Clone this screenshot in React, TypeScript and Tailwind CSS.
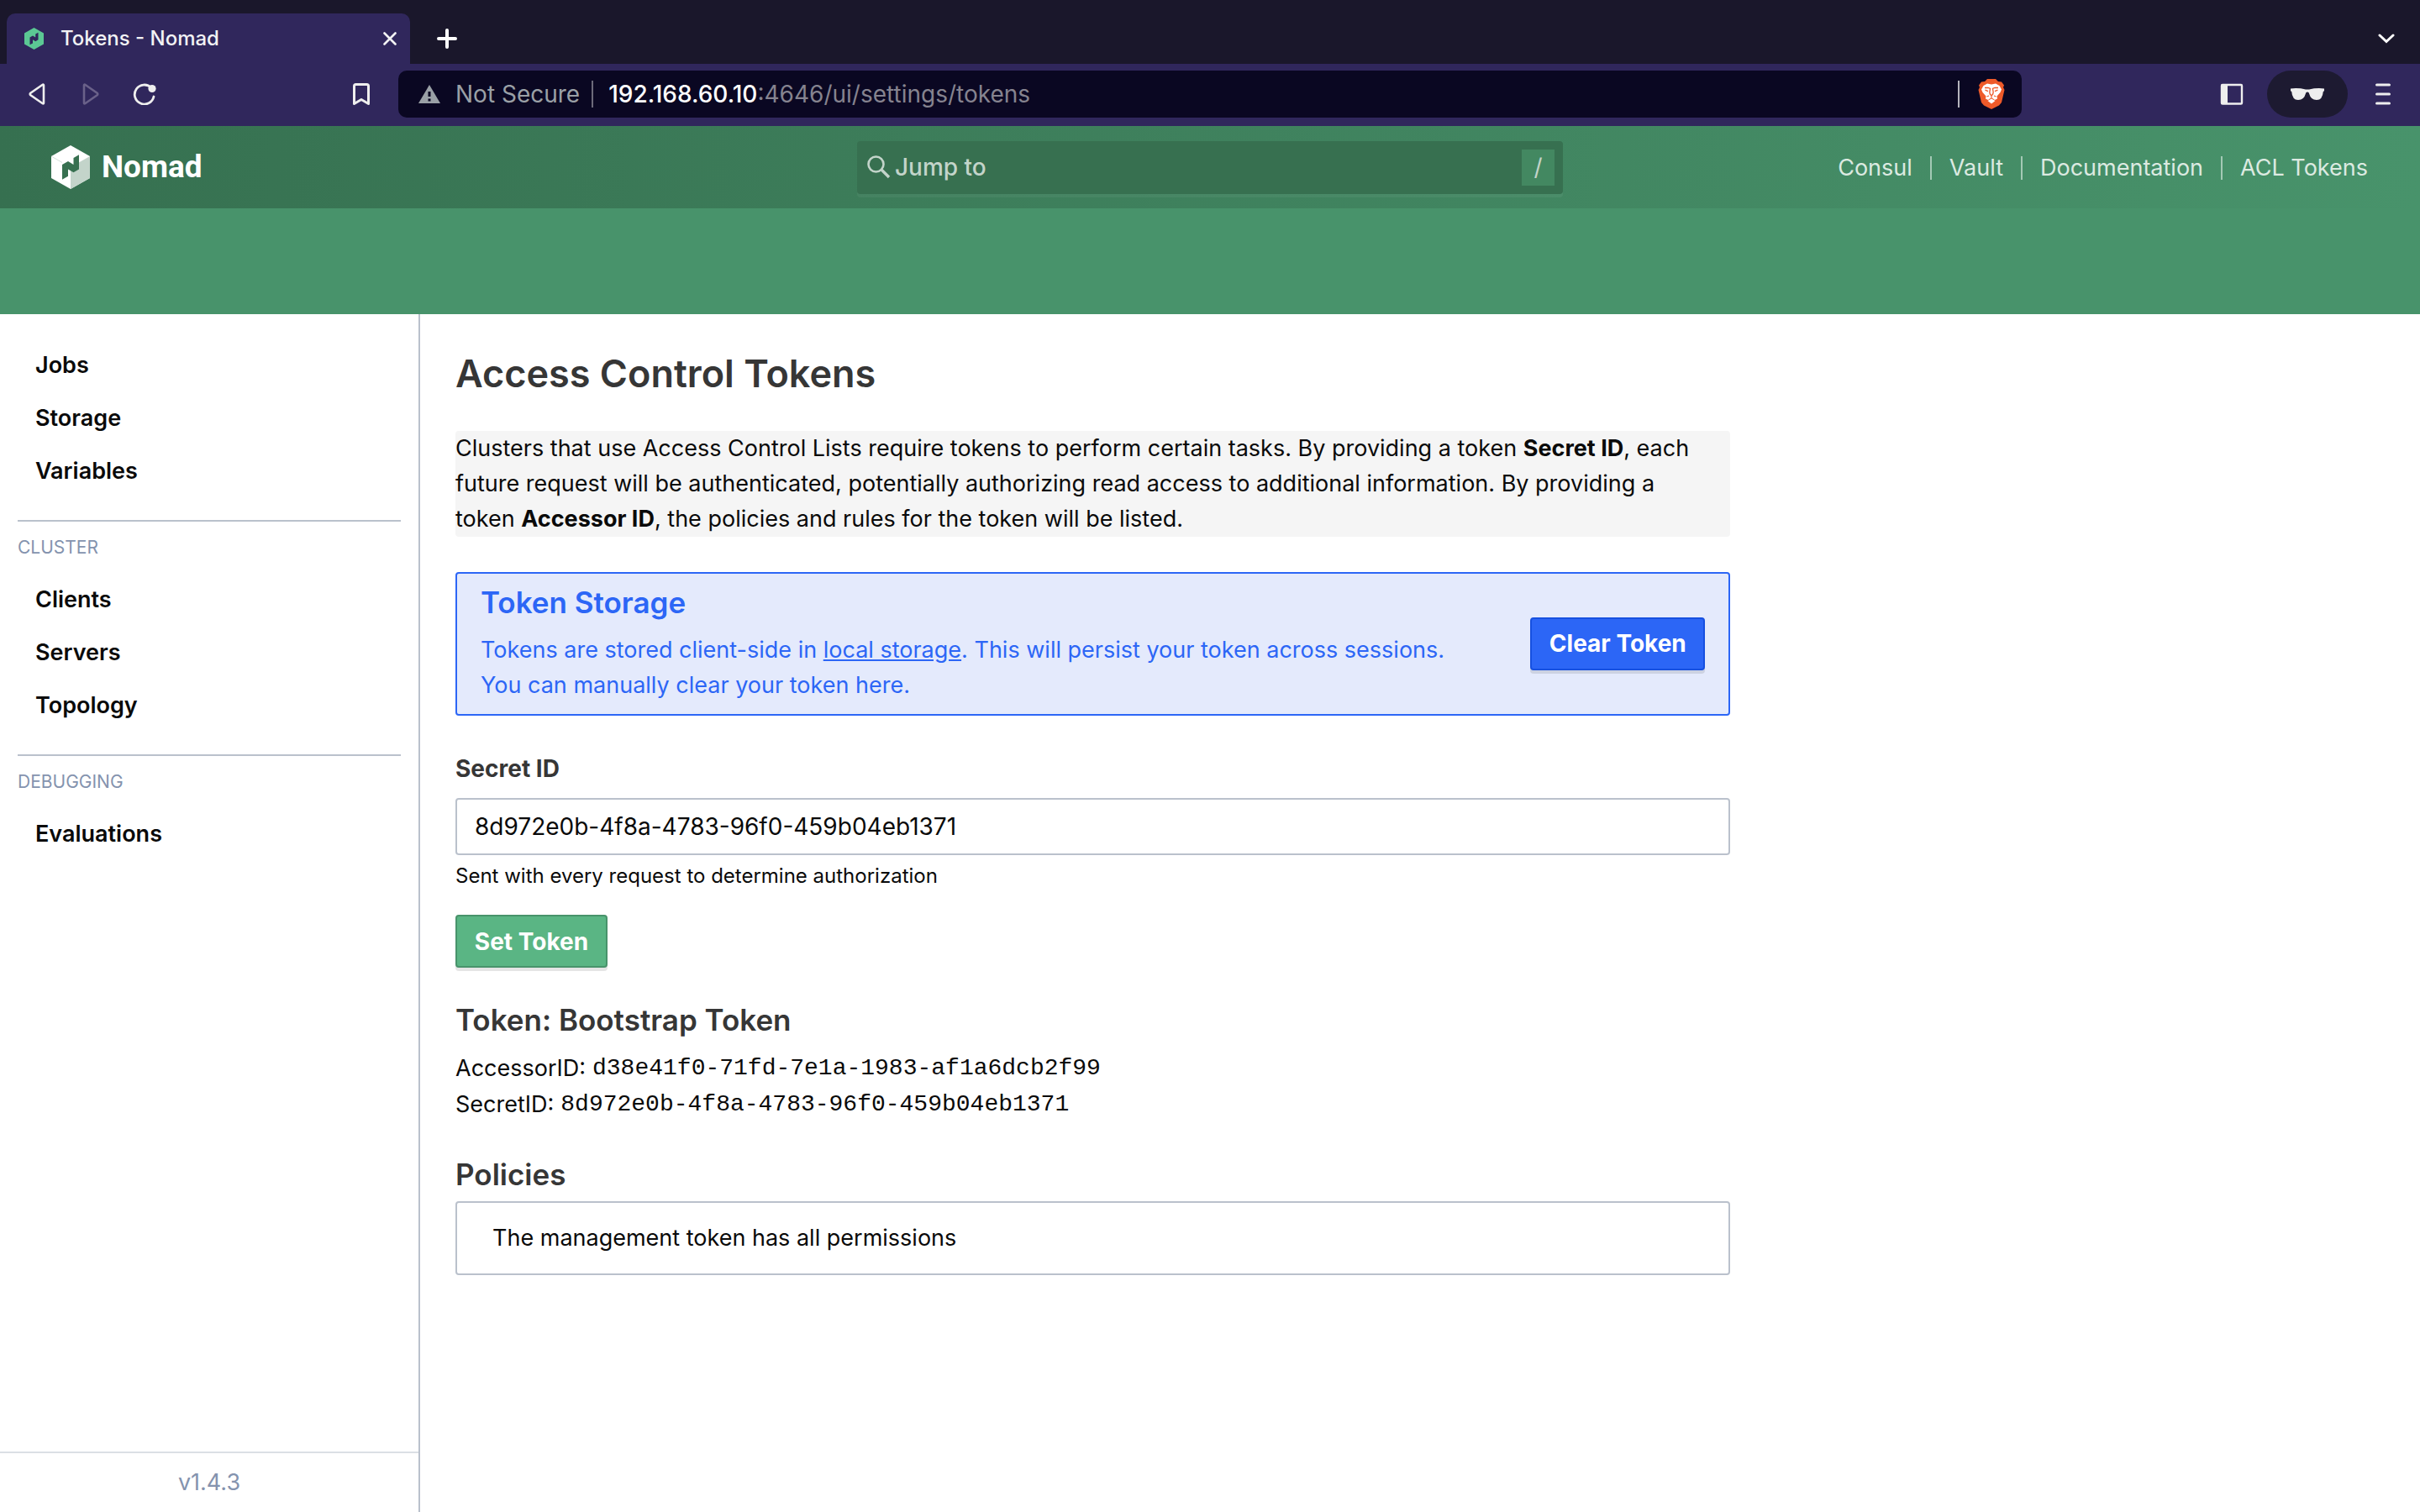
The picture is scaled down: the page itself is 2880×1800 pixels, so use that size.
import React from "react";

const clusterLinks = ["Clients", "Servers", "Topology"];
const workloadLinks = ["Jobs", "Storage", "Variables"];
const headerLinks = ["Consul", "Vault", "Documentation", "ACL Tokens"];

const HEX = "M23 0 46 13V39L23 52 0 39V13Z";
const LETTER = "M13 23 20 19 26.5 23V15L33 11.3V28.5L26.5 32.3 20 28.5V36.8L13 40.7Z";

function NomadFavicon() {
  return (
    <svg viewBox="0 0 46 52" className="h-[26px] w-[23px] shrink-0" aria-hidden="true">
      <path d={HEX} fill="#5bc894" />
      <path d={LETTER} fill="#30275c" />
    </svg>
  );
}

function NomadLogo() {
  return (
    <svg viewBox="0 0 46 52" className="h-[52px] w-[46px] shrink-0" aria-hidden="true">
      <path d={HEX} fill="#fff" />
      <path d="M46 13V39L23 52V26Z" fill="#c3d4ca" />
      <path d="M0 13 13 20.5" stroke="#c3d4ca" strokeWidth="0.7" />
      <path d={LETTER} fill="#377050" />
    </svg>
  );
}

function BraveLion() {
  return (
    <svg viewBox="0 0 32 36" className="h-9 w-8 shrink-0" aria-hidden="true">
      <path
        d="M11 0H21L24 3 28 3.5 31 7.5 30 10 31.5 13 28 28 25 31.5 16 36 7 31.5 4 28 0.5 13 2 10 1 7.5 4 3.5 8 3Z"
        fill="#ee5a29"
      />
      <path
        d="M16 6.5 21 5.5 25.5 8 28 12.5 26.5 16 22.5 20.5 23 23.5 20 25 16 22 12 25 9 23.5 9.5 20.5 5.5 16 4 12.5 6.5 8 11 5.5Z"
        fill="#fff"
      />
      <path d="M16 23.5 20.5 26 16 29.5 11.5 26Z" fill="#fff" />
      <path
        d="M8 10.5 12 10.5 14.5 11.5 13.8 16 14.5 18.5 16 19.5 17.5 18.5 18.2 16 17.5 11.5 20 10.5 24 10.5"
        fill="none"
        stroke="#ee5a29"
        strokeWidth="1.3"
      />
      <path d="M8.5 13.2 12 14.6M23.5 13.2 20 14.6" stroke="#ee5a29" strokeWidth="1.3" />
      <path d="M16 19.5V22M10.5 21 13 20M21.5 21 19 20" stroke="#ee5a29" strokeWidth="1.2" />
    </svg>
  );
}

function IconButton({
  label,
  disabled,
  children,
}: {
  label: string;
  disabled?: boolean;
  children: React.ReactNode;
}) {
  return (
    <button
      type="button"
      aria-label={label}
      disabled={disabled}
      className="flex h-14 w-16 shrink-0 items-center justify-center text-[#eeeeee] disabled:text-[#6a6189]"
    >
      {children}
    </button>
  );
}

function TabStrip() {
  return (
    <div className="flex h-[76px] items-end bg-[#1a172b] pl-2 text-white">
      <div className="flex h-[60px] w-[480px] items-center rounded-t-[10px] bg-[#30275c] pr-4 pl-[21px]">
        <NomadFavicon />
        <span className="ml-5 text-[24px] font-medium text-[#f2f2f4]">Tokens - Nomad</span>
        <button type="button" aria-label="Close tab" className="ml-auto">
          <svg viewBox="0 0 16 16" className="size-4" aria-hidden="true">
            <path d="M1.5 1.5 14.5 14.5M14.5 1.5 1.5 14.5" stroke="#f2f2f4" strokeWidth="2.6" strokeLinecap="round" />
          </svg>
        </button>
      </div>
      <button type="button" aria-label="New tab" className="flex h-[60px] w-[88px] items-center justify-center">
        <svg viewBox="0 0 24 24" className="size-6" aria-hidden="true">
          <path d="M12 2V22M2 12H22" stroke="currentColor" strokeWidth="4" strokeLinecap="round" />
        </svg>
      </button>
      <button
        type="button"
        aria-label="Search tabs"
        className="mr-[10px] ml-auto flex h-[60px] w-[60px] items-center justify-center"
      >
        <svg viewBox="0 0 20 12" className="h-3 w-5" aria-hidden="true">
          <path d="M2 2 10 9.5 18 2" fill="none" stroke="currentColor" strokeWidth="3" strokeLinecap="round" />
        </svg>
      </button>
    </div>
  );
}

function Toolbar() {
  return (
    <div className="flex h-[74px] items-center bg-[#30275c] pt-2 pb-[10px]">
      <div className="flex w-[474px] shrink-0 px-3">
        <IconButton label="Back">
          <svg viewBox="0 0 20 26" className="h-[26px] w-5" aria-hidden="true">
            <path
              d="M18 2.6V23.4Q18 25 16.4 24L2.4 14.2Q1 13 2.4 11.8L16.4 2Q18 1 18 2.6Z"
              fill="none"
              stroke="currentColor"
              strokeWidth="2.6"
            />
          </svg>
        </IconButton>
        <IconButton label="Forward" disabled>
          <svg viewBox="0 0 20 26" className="h-[26px] w-5" aria-hidden="true">
            <path
              d="M2 2.6V23.4Q2 25 3.6 24L17.6 14.2Q19 13 17.6 11.8L3.6 2Q2 1 2 2.6Z"
              fill="none"
              stroke="currentColor"
              strokeWidth="2.6"
            />
          </svg>
        </IconButton>
        <IconButton label="Reload">
          <svg viewBox="0 0 28 26" className="h-[26px] w-7" aria-hidden="true">
            <path
              d="M22 5.5A11.5 11.5 0 1 0 25 16"
              fill="none"
              stroke="currentColor"
              strokeWidth="2.8"
              strokeLinecap="round"
            />
            <circle cx="23" cy="6.5" r="4.6" fill="currentColor" />
          </svg>
        </IconButton>
        <div className="ml-auto">
          <IconButton label="Bookmark this tab">
            <svg viewBox="0 0 20 26" className="h-[26px] w-5" aria-hidden="true">
              <path
                d="M3.5 1.5H16.5Q18.5 1.5 18.5 3.5V24.5L10 19.5 1.5 24.5V3.5Q1.5 1.5 3.5 1.5Z"
                fill="none"
                stroke="currentColor"
                strokeWidth="3"
                strokeLinejoin="round"
              />
            </svg>
          </IconButton>
        </div>
      </div>

      <div className="flex h-14 flex-1 items-center rounded-[10px] bg-[#0a0722] pr-5 pl-6 text-[28px]">
        <svg viewBox="0 0 26 22" className="h-[22px] w-[26px] shrink-0" aria-hidden="true">
          <path d="M13 0 26 22H0Z" fill="#9aa0a6" />
          <path d="M11.5 8H14.5V14H11.5ZM11.5 16.5H14.5V19.5H11.5Z" fill="#0a0722" />
        </svg>
        <span className="ml-[18px] text-[#9aa0a6]">Not Secure</span>
        <span className="mr-[18px] ml-[14px] h-8 w-0.5 bg-[#6c6a7a]" />
        <span className="text-[#85838f]">
          <span className="font-medium text-white">192.168.60.10</span>:4646/ui/settings/tokens
        </span>
        <span className="mr-[22px] ml-auto h-8 w-0.5 bg-[#b5b4bd]" />
        <button type="button" aria-label="Brave Shields">
          <BraveLion />
        </button>
      </div>

      <div className="flex w-[474px] shrink-0 justify-end gap-[10px] pr-3">
        <IconButton label="Show sidebar">
          <svg viewBox="0 0 28 26" className="h-[26px] w-7" aria-hidden="true">
            <rect x="2" y="2" width="24" height="22.5" rx="1" fill="none" stroke="currentColor" strokeWidth="2.4" />
            <path d="M1.5 1.5H9V25H1.5Z" fill="currentColor" />
          </svg>
        </IconButton>
        <button
          type="button"
          aria-label="Private window"
          className="flex h-14 w-24 items-center justify-center rounded-full bg-[#1d1a31]"
        >
          <svg viewBox="0 0 40 14" className="h-[14px] w-10" aria-hidden="true">
            <path
              d="M0 0.5Q9 -0.6 18 1.5H22Q31 -0.6 40 0.5V3.2L38.8 4Q38 14 31 14Q24 14 22.3 7Q21.8 4.6 20 4.6Q18.2 4.6 17.7 7Q16 14 9 14Q2 14 1.2 4L0 3.2Z"
              fill="#eeeeee"
            />
          </svg>
        </button>
        <IconButton label="Menu">
          <svg viewBox="0 0 18 26" className="h-[26px] w-[18px]" aria-hidden="true">
            <path d="M1.5 2H16.5M1.5 13H16.5M1.5 24H16.5" stroke="currentColor" strokeWidth="3" strokeLinecap="round" />
          </svg>
        </IconButton>
      </div>
    </div>
  );
}

function Header() {
  return (
    <header className="bg-[#48936b] pb-[126px]">
      <div className="grid h-[98px] grid-cols-[1fr_840px_1fr] items-center bg-linear-to-r from-[#367050] to-[#48936b]">
        <a href="#home" className="ml-[61px] flex items-center gap-[14px] justify-self-start text-white">
          <NomadLogo />
          <span className="font-['Roboto',sans-serif] text-[37px] font-bold">Nomad</span>
        </a>
        <button
          type="button"
          className="flex h-[63px] items-center rounded-sm bg-[#377050] pr-[10px] pl-3 text-[28px] font-medium text-[#c3d4ca] shadow-[0_4px_0_0_rgba(255,255,255,0.05)]"
        >
          <svg viewBox="0 0 28 28" className="size-7" aria-hidden="true">
            <circle cx="10.5" cy="10.5" r="9" fill="none" stroke="currentColor" strokeWidth="2.6" />
            <path d="M17 17 26 26" stroke="currentColor" strokeWidth="3.4" />
          </svg>
          <span className="ml-[5px]">Jump to</span>
          <kbd className="ml-auto flex h-[43px] w-[39px] items-center justify-center bg-[#438861] font-['Inter',sans-serif] font-normal">
            /
          </kbd>
        </button>
        <nav className="mr-[41px] flex items-center justify-self-end pt-0.5 text-[27px] text-[#dceae1]">
          {headerLinks.map((link, i) => (
            <React.Fragment key={link}>
              {i > 0 && <span className="h-7 w-0.5 bg-[#a4c9b5]" />}
              <a href="#nav" className="px-[21px]">
                {link}
              </a>
            </React.Fragment>
          ))}
        </nav>
      </div>
    </header>
  );
}

function NavGroup({ title, links }: { title?: string; links: string[] }) {
  return (
    <section>
      {title && (
        <h2 className="mx-[21px] mb-[14px] border-t-2 border-[#bac1cc] pt-[15px] text-[21px] leading-8 text-[#8493ae] uppercase">
          {title}
        </h2>
      )}
      <ul className="pb-[27px] pl-[42px] text-[27px] font-semibold">
        {links.map((link) => (
          <li key={link}>
            <a href="#nav" className="block h-[63px] leading-[63px]">
              {link}
            </a>
          </li>
        ))}
      </ul>
    </section>
  );
}

function Sidebar() {
  return (
    <aside className="flex w-[500px] shrink-0 flex-col border-r-2 border-[#bac1cc] pt-[29px]">
      <NavGroup links={workloadLinks} />
      <NavGroup title="Cluster" links={clusterLinks} />
      <NavGroup title="Debugging" links={["Evaluations"]} />
      <footer className="mt-auto border-t-2 border-[#dbdfe5] text-center text-[27px] leading-[70px] text-[#8493ae]">
        v1.4.3
      </footer>
    </aside>
  );
}

function TokenSettings() {
  return (
    <main className="flex-1 pt-[41px] pr-[62px] pl-[42px]">
      <div className="w-2/3">
        <h1 className="text-[45px] leading-[60px] font-semibold text-[#363636]">Access Control Tokens</h1>
        <p className="mt-[38px] rounded-sm bg-[#f5f5f5] pr-6 leading-[42px]">
          Clusters that use Access Control Lists require tokens to perform certain tasks. By providing a token{" "}
          <strong className="font-bold">Secret ID</strong>, each future request will be authenticated, potentially
          authorizing read access to additional information. By providing a token{" "}
          <strong className="font-bold">Accessor ID</strong>, the policies and rules for the token will be listed.
        </p>

        <section className="mt-[42px] flex items-center justify-between rounded-sm border-2 border-[#2c66f6] bg-[#e4eafc] px-7 pt-3 pb-[13px] text-[#2c66f6]">
          <div>
            <h2 className="mb-[14px] text-[35px] leading-[44px] font-semibold">Token Storage</h2>
            <p className="leading-[42px]">
              Tokens are stored client-side in{" "}
              <a href="#storage" className="underline">
                local storage
              </a>
              . This will persist your token across sessions.
              <br />
              You can manually clear your token here.
            </p>
          </div>
          <button
            type="button"
            className="h-[63px] w-[208px] shrink-0 rounded-sm border-2 border-[#1650e0] bg-[#2c66f6] text-[28px] font-bold text-white shadow-[0_4px_0_0_rgba(0,0,0,0.1)]"
          >
            Clear Token
          </button>
        </section>

        <form className="mt-[42px]" onSubmit={(e) => e.preventDefault()}>
          <label htmlFor="secret" className="block text-[28px] leading-[42px] font-bold text-[#363636]">
            Secret ID
          </label>
          <input
            id="secret"
            type="text"
            defaultValue="8d972e0b-4f8a-4783-96f0-459b04eb1371"
            className="mt-[14px] block h-[68px] w-full rounded-sm border-2 border-[#bac1cc] bg-white px-[21px] text-[28px]"
          />
          <p className="mt-[7px] text-[24px] leading-9">Sent with every request to determine authorization</p>
          <button
            type="submit"
            className="mt-7 block h-[63px] w-[181px] rounded-sm border-2 border-[#48936b] bg-[#5ab584] text-[28px] font-bold text-white shadow-[0_4px_0_0_rgba(0,0,0,0.1)]"
          >
            Set Token
          </button>
        </form>

        <section className="mt-10">
          <h2 className="text-[35px] leading-[44px] font-semibold text-[#363636]">Token: Bootstrap Token</h2>
          <dl className="mt-[14px] leading-[43px]">
            <div className="flex gap-2">
              <dt>AccessorID:</dt>
              <dd className="font-['Liberation_Mono',monospace] text-[28px]">d38e41f0-71fd-7e1a-1983-af1a6dcb2f99</dd>
            </div>
            <div className="flex gap-2">
              <dt>SecretID:</dt>
              <dd className="font-['Liberation_Mono',monospace] text-[28px]">8d972e0b-4f8a-4783-96f0-459b04eb1371</dd>
            </div>
          </dl>
        </section>

        <section className="mt-10">
          <h2 className="text-[35px] leading-[44px] font-semibold text-[#363636]">Policies</h2>
          <div className="mt-[10px] rounded-sm border-2 border-[#bac1cc] px-[42px] py-[21px] leading-[42px]">
            The management token has all permissions
          </div>
        </section>
      </div>
    </main>
  );
}

export default function App() {
  return (
    <div className="flex min-h-screen flex-col bg-white font-['Inter',sans-serif] text-[27px] text-[#0a0a0a]">
      <TabStrip />
      <Toolbar />
      <Header />
      <div className="flex flex-1">
        <Sidebar />
        <TokenSettings />
      </div>
    </div>
  );
}
